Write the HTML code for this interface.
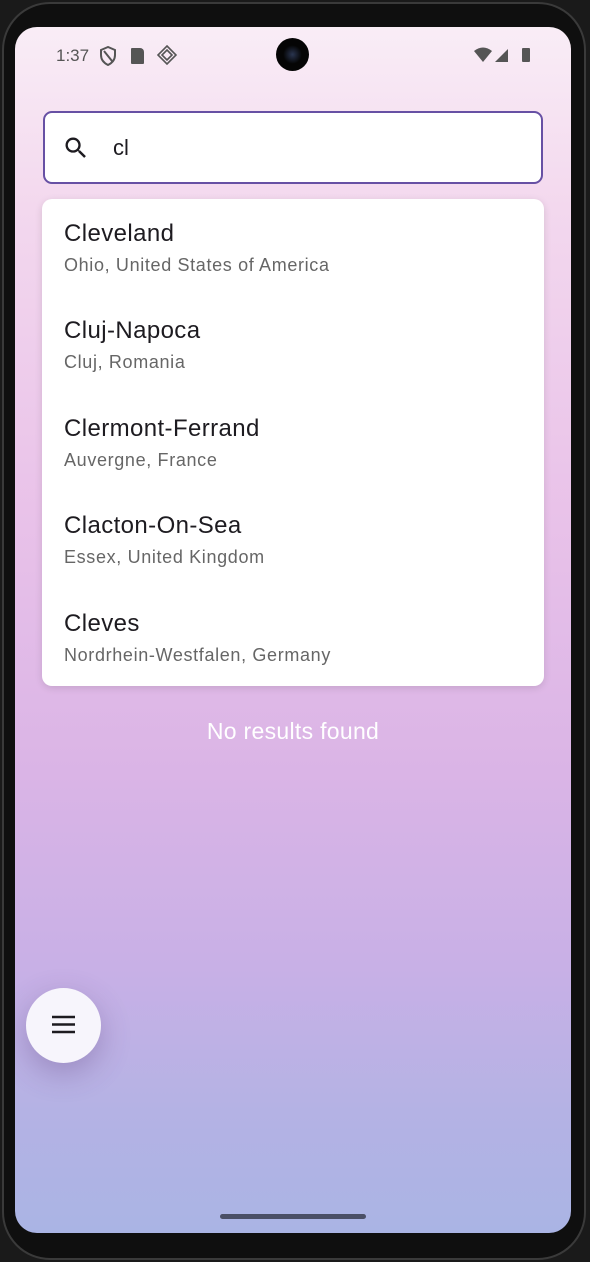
<!DOCTYPE html><html><head><style>
body{margin:0;width:590px;height:1262px;background:#1a1a1a;position:relative;overflow:hidden;font-family:"Liberation Sans",sans-serif}
.frame{position:absolute;left:2px;top:2px;width:584px;height:1258px;border-radius:48px;background:#0f0f0f;border:2px solid #3a3a3a;box-sizing:border-box}
.scr{position:absolute;left:15px;top:27px;width:556px;height:1206px;border-radius:22px;overflow:hidden;background:linear-gradient(#f9edf6 0%,#f3d8ee 15%,#e9c2e9 40%,#dab4e6 62%,#c8b0e6 78%,#b4b2e4 90%,#aab4e4 100%)}
.st{position:absolute;top:19px;font-size:17px;color:#555}
.cam{position:absolute;left:261px;top:11px;width:33px;height:33px;border-radius:50%;background:radial-gradient(circle at 50% 50%,#2a3550 0,#050505 40%)}
.search{position:absolute;left:28px;top:84px;width:500px;height:73px;box-sizing:border-box;border:2px solid #6750a4;border-radius:9px;background:#fff}
.card{position:absolute;left:27px;top:172px;width:502px;height:487px;background:#fff;border-radius:10px;box-shadow:0 2px 8px rgba(0,0,0,.12)}
.it{position:absolute;left:22px}
.t{font-size:24px;color:#1d1b20;letter-spacing:.4px}
.s{font-size:18px;color:#666;margin-top:7px;letter-spacing:.65px}
.nr{position:absolute;top:691px;width:100%;text-align:center;color:#fff;font-size:23px;letter-spacing:.3px}
.fab{position:absolute;left:11px;top:961px;width:75px;height:75px;border-radius:50%;background:#f7f5fc;box-shadow:0 10px 30px rgba(80,50,110,.3)}
.bar{position:absolute;left:205px;top:1187px;width:146px;height:5px;border-radius:3px;background:#4a4f66}
</style></head><body>
<div class="frame"></div>
<div class="scr">
<div class="st" style="left:41px">1:37</div>
<svg style="position:absolute;left:84px;top:19px" width="18" height="20" viewBox="0 0 18 20"><path d="M9 1L2 4v5c0 5 3 8 7 10 4-2 7-5 7-10V4z M5 5l8 10" fill="none" stroke="#555" stroke-width="2"/></svg>
<div style="position:absolute;left:116px;top:21px;width:13px;height:16px;background:#555;border-radius:1px 4px 1px 1px"></div>
<svg style="position:absolute;left:142px;top:18px" width="20" height="20" viewBox="0 0 20 20"><path d="M10 1L19 10 10 19 1 10z M10 5L15 10 10 15 5 10z" fill="none" stroke="#555" stroke-width="1.6"/></svg>
<svg style="position:absolute;left:459px;top:19px" width="60" height="18" viewBox="0 0 60 18"><path d="M0 5Q9-2 18 5L9 16z" fill="#555"/><path d="M21 16L34 3V16z" fill="#555"/><rect x="48" y="2" width="8" height="14" rx="1" fill="#555"/></svg>
<div class="cam"></div>
<div class="search"><svg style="position:absolute;left:17px;top:21px" width="28" height="28" viewBox="0 0 24 24"><path d="M15.5 14h-.79l-.28-.27A6.470 6.470 0 0016 9.5 6.5 6.5 0 109.5 16c1.61 0 3.090-.59 4.23-1.57l.27.28v.79l5 4.99L20.49 19zm-6 0C7.01 14 5 11.99 5 9.5S7.01 5 9.5 5 14 7.01 14 9.5 11.99 14 9.5 14z" fill="#1d1b20"/></svg><div style="position:absolute;left:68px;top:22px;font-size:22px;color:#1d1b20">cl</div></div>
<div class="card">
<div class="it" style="top:21px"><div class="t">Cleveland</div><div class="s">Ohio, United States of America</div></div>
<div class="it" style="top:118px"><div class="t">Cluj-Napoca</div><div class="s">Cluj, Romania</div></div>
<div class="it" style="top:216px"><div class="t">Clermont-Ferrand</div><div class="s">Auvergne, France</div></div>
<div class="it" style="top:313px"><div class="t">Clacton-On-Sea</div><div class="s">Essex, United Kingdom</div></div>
<div class="it" style="top:411px"><div class="t">Cleves</div><div class="s">Nordrhein-Westfalen, Germany</div></div>
</div>
<div class="nr">No results found</div>
<div class="fab"><svg style="position:absolute;left:26px;top:27px" width="23" height="20" viewBox="0 0 23 20"><path d="M0 2h23M0 9.5h23M0 17h23" stroke="#1d1b20" stroke-width="2.4"/></svg></div>
<div class="bar"></div>
</div>
</body></html>
